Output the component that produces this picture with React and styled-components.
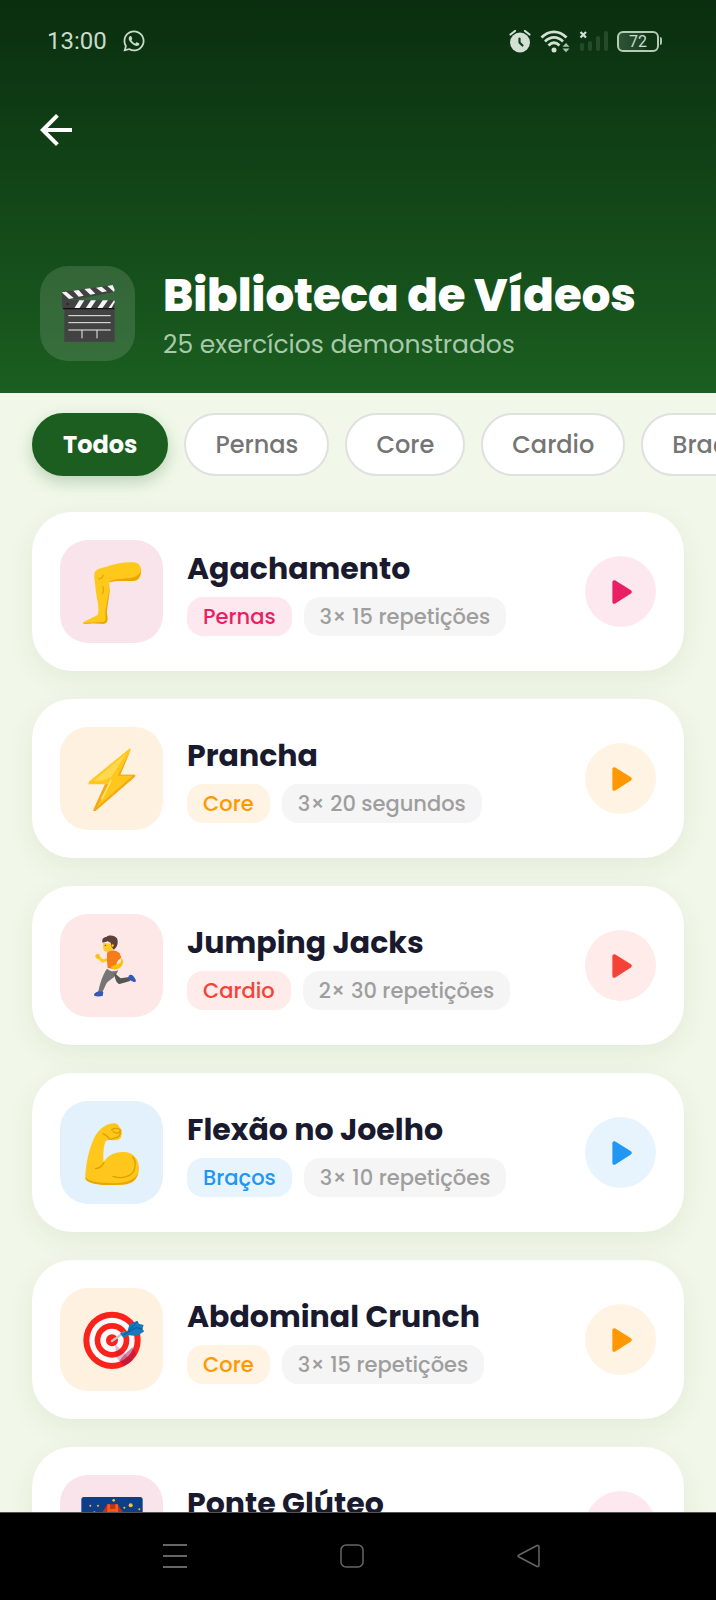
import styled, { createGlobalStyle } from 'styled-components';
import { FaWhatsapp } from 'react-icons/fa';

const GlobalStyle = createGlobalStyle`
  * {
    box-sizing: border-box;
  }

  body {
    margin: 0;
    background-color: #f1f8e9;
    font-family: 'Poppins', 'Inter', sans-serif;
  }

  button {
    font-family: inherit;
    cursor: pointer;
  }
`;

const Screen = styled.div`
  height: 100vh;
  display: flex;
  flex-direction: column;
  overflow: hidden;
`;

const Header = styled.header`
  flex-shrink: 0;
  padding-bottom: 29px;
  background: linear-gradient(180deg, #0a2e0f 0%, #1b5e20 100%);
  color: white;
`;

const StatusBar = styled.div`
  height: 82px;
  padding: 0 54px 0 47px;
  display: flex;
  align-items: center;
  justify-content: space-between;
  font-family: 'Roboto', sans-serif;
  font-size: 24px;
  color: #c8dcc9;
`;

const StatusGroup = styled.div`
  display: flex;
  align-items: center;
  gap: ${props => props.$gap};
`;

const Battery = styled.div`
  display: flex;
  align-items: center;
  gap: 1px;

  &::after {
    content: '';
    width: 2px;
    height: 8px;
    border-radius: 0 2px 2px 0;
    background-color: #a9c4ab;
  }
`;

const BatteryBody = styled.div`
  width: 42px;
  height: 21px;
  border: 2px solid #b4ccb5;
  border-radius: 6px;
  background: linear-gradient(90deg, #2f5234 0%, #1d4224 60%, #0d3413 72%);
  font-size: 16px;
  line-height: 18px;
  text-align: center;
`;

const BackButton = styled.button`
  margin: 24px 0 0 32px;
  padding: 0;
  border: none;
  background: none;
  color: white;
  display: flex;

  svg {
    width: 48px;
    height: 48px;
  }
`;

const Heading = styled.div`
  margin-top: 108px;
  padding: 0 40px;
  display: flex;
  align-items: center;
  gap: 28px;
`;

const HeadingIcon = styled.div`
  width: 95px;
  height: 95px;
  border-radius: 28px;
  background-color: rgba(255, 255, 255, 0.13);
  display: flex;
  align-items: center;
  justify-content: center;
`;

const HeadingText = styled.div`
  padding-top: 4px;
`;

const Title = styled.h1`
  margin: 0;
  font-size: 45px;
  font-weight: 800;
  line-height: 60px;
  white-space: nowrap;
`;

const Subtitle = styled.p`
  margin: 0;
  font-size: 25px;
  line-height: 38px;
  color: #a9c9ab;
`;

const Filters = styled.nav`
  flex-shrink: 0;
  padding: 20px 32px 36px;
  display: flex;
  gap: 16px;
  overflow: hidden;
`;

const FilterChip = styled.button`
  flex-shrink: 0;
  height: 63px;
  padding: 0 29px;
  border: 2px solid ${props => (props.$active ? '#1b5e20' : '#e0e0e0')};
  border-radius: 32px;
  background-color: ${props => (props.$active ? '#1b5e20' : 'white')};
  box-shadow: ${props => (props.$active ? '0 6px 16px rgba(27, 94, 32, 0.25)' : 'none')};
  color: ${props => (props.$active ? 'white' : '#757575')};
  font-size: 24px;
  font-weight: ${props => (props.$active ? 700 : 500)};
`;

const List = styled.main`
  flex: 1;
  min-height: 0;
  padding: 0 32px;
  display: flex;
  flex-direction: column;
  gap: 28px;
`;

const Card = styled.article`
  flex-shrink: 0;
  padding: 28px;
  border-radius: 40px;
  background-color: white;
  box-shadow: 0 8px 28px rgba(40, 60, 30, 0.07);
  display: flex;
  align-items: center;
  gap: 24px;
`;

const Thumb = styled.div`
  width: 103px;
  height: 103px;
  border-radius: 28px;
  background-color: ${props => props.$tint};
  display: flex;
  align-items: center;
  justify-content: center;
`;

const CardBody = styled.div`
  flex: 1;
  padding-top: 2px;
`;

const CardTitle = styled.h2`
  margin: 0 0 8px;
  font-size: 30px;
  font-weight: 700;
  line-height: 40px;
  color: #1a1a2e;
`;

const Tags = styled.div`
  display: flex;
  gap: 12px;
`;

const Tag = styled.span`
  padding: 1px 16px 0;
  border-radius: 16px;
  background-color: ${props => props.$tint};
  color: ${props => props.$color};
  font-size: 21px;
  font-weight: 500;
  line-height: 38px;
  white-space: nowrap;
`;

const PlayButton = styled.button`
  width: 71px;
  height: 71px;
  padding: 0;
  border: none;
  border-radius: 50%;
  background-color: ${props => props.$tint};
  color: ${props => props.$color};
  display: flex;
  align-items: center;
  justify-content: center;
`;

const SystemNav = styled.footer`
  flex-shrink: 0;
  height: 88px;
  padding: 0 12px 2px 0;
  border-top: 1px solid #555;
  background-color: black;
  display: flex;
  align-items: center;
  justify-content: center;
  gap: 153px;
`;

const SystemButton = styled.button`
  padding: 0;
  border: none;
  background: none;
  color: #666;
  display: flex;
`;

const AlarmIcon = () => (
  <svg width="22" height="24" viewBox="0 0 22 24">
    <path d="M1.5 5.5L6 2M20.5 5.5L16 2" stroke="#d3e0d4" strokeWidth="2.2" strokeLinecap="round" />
    <circle cx="11" cy="13.5" r="10" fill="#d3e0d4" />
    <path d="M10.5 9.5V13.5L13.5 16.5" stroke="#123d18" strokeWidth="2.2" fill="none" strokeLinecap="round" />
  </svg>
);

const WifiIcon = () => (
  <svg width="30" height="24" viewBox="0 0 30 24">
    <g fill="none" stroke="#d3e0d4" strokeWidth="2.8">
      <path d="M1.5 8.5C9 1 19 1 26.5 8.5" />
      <path d="M5 12.5C10.5 7 17.5 7 23 12.5" />
      <path d="M8.5 16.5C12 13 16 13 19.5 16.5" />
    </g>
    <circle cx="14" cy="21" r="2.5" fill="#d3e0d4" />
    <path d="M22.5 17.8L26 14L29.5 17.8ZM22.5 19.5L26 23.3L29.5 19.5Z" fill="#a9c4ab" />
  </svg>
);

const SignalIcon = () => (
  <svg width="29" height="24" viewBox="0 0 29 24">
    <path d="M1.5 3L7 8.5M7 3L1.5 8.5" stroke="#d3e0d4" strokeWidth="2.2" />
    <g stroke="#244c29" strokeWidth="4" strokeLinecap="round">
      <path d="M3 16V20M11 14V20M19 9V20M27 4V20" />
    </g>
  </svg>
);

const PlayIcon = () => (
  <svg width="46" height="46" viewBox="0 0 24 24" fill="currentColor">
    <path d="M7.5 6.82v10.36c0 .79.87 1.27 1.54.84l8.14-5.18c.62-.39.62-1.29 0-1.69L9.04 5.98C8.37 5.55 7.5 6.03 7.5 6.82z" />
  </svg>
);

const ClapperIcon = () => (
  <svg width="64" height="64" viewBox="167 122 192 192">
    <path d="M184 155L338 134L342 155L217 180H343V304H192V204L186 203Z" fill="#424242" />
    <path d="M205 170L226 179L342 155V179H217Z" fill="#37693b" />
    <g fill="#f5f5f5">
      <path d="M184 156L198 154L220 173L206 176Z" />
      <path d="M219 151L235 149L250 166L235 169Z" />
      <path d="M252 146L269 144L285 160L270 163Z" />
      <path d="M287 142L304 139L320 153L305 156Z" />
      <path d="M321 137L337 134L343 148L341 155Z" />
      <path d="M237 180H252L237 204H222Z" />
      <path d="M272 180H287L271 204H256Z" />
      <path d="M307 180H323L306 204H291Z" />
      <path d="M341 180L344 184L333 204H324Z" />
    </g>
    <path d="M188 205H342" stroke="#111" strokeWidth="4" />
    <path d="M204 226H331M204 247H331M204 269H331M245 269V294M290 269V294" stroke="#eee" strokeWidth="3" />
    <circle cx="202" cy="191" r="3" fill="#222" />
  </svg>
);

const LegIcon = () => (
  <svg width="64" height="64" viewBox="178 179 192 192">
    <path
      d="M222 216C226 206 242 203 256 199C282 190 314 184 338 186C356 187 363 200 361 216C360 234 352 242 334 242C308 243 282 239 264 247C270 262 268 278 263 296C259 315 258 333 260 350C262 362 258 369 247 370L215 369C205 371 188 372 187 368C187 363 202 360 211 354C222 347 232 348 233 335C235 307 225 286 224 258C222 239 219 228 222 216Z"
      fill="#ffc91c"
    />
    <path
      d="M361 204C361 217 352 227 338 231C315 238 277 232 264 247C283 239 307 243 334 242C354 242 361 230 361 204ZM264 247C270 270 256 308 254 341C254 354 257 362 247 365L187 368C188 372 202 370 215 369L247 370C261 370 262 359 259 340C258 314 270 289 264 247Z"
      fill="#eba600"
    />
    <path d="M235 236C242 235 247 231 247 224M247 259C250 267 249 274 246 280" fill="none" stroke="#eba600" strokeWidth="4" strokeLinecap="round" />
  </svg>
);

const BoltIcon = () => (
  <svg width="64" height="64" viewBox="178 170 192 192">
    <path d="M325 176L207 272C202 277 203 282 210 282H253L219 357C217 363 221 364 225 361L341 261C346 256 344 253 338 253H299L329 181C331 175 329 173 325 176Z" fill="#ffc61c" />
    <path d="M318 187L218 272H244L272 260Z" fill="#ffd84b" />
    <path d="M329 181L291 256H336L229 350L267 282H210C204 281 204 278 206 274L204 280C203 282 205 283 210 282H253L219 357C217 363 221 364 225 361L341 261C346 256 344 253 338 253H299Z" fill="#f4a91b" />
    <path d="M271 270L244 325" stroke="#ffe36b" strokeWidth="5" strokeLinecap="round" />
  </svg>
);

const RunnerIcon = () => (
  <svg width="64" height="64" viewBox="178 161 192 192">
    <path d="M248 188L276 190V211L264 216L250 212C247 205 247 198 248 188Z" fill="#ffca28" />
    <path d="M246 187C242 177 249 170 257 170C265 162 283 165 289 174C294 187 290 202 279 208L273 200L270 187L261 183Z" fill="#5d4037" />
    <path d="M272 194C278 188 283 196 276 201" fill="#ffca28" />
    <circle cx="254" cy="195" r="2" fill="#513529" />
    <path d="M231 229L246 242L260 238" fill="none" stroke="#ffca28" strokeWidth="9" strokeLinecap="round" />
    <circle cx="231" cy="228" r="7" fill="#ffc107" />
    <path d="M259 217C272 207 288 209 297 219L302 232C297 237 288 240 288 252L285 267L261 263L259 241Z" fill="#f57c18" />
    <path d="M299 232C304 240 301 251 284 253L272 258C270 264 276 268 285 267C300 264 311 252 306 238Z" fill="#ffc107" />
    <path d="M259 265C267 273 280 275 293 270L286 284C277 295 263 301 258 308C252 320 247 331 244 340L232 336C237 317 243 287 259 265Z" fill="#757575" />
    <path d="M281 278L300 294L326 290L328 302L297 311C287 310 282 293 281 278Z" fill="#555" />
    <path d="M324 287C328 280 337 282 342 293C347 299 347 307 340 305C330 301 321 299 324 287ZM220 342C226 333 238 331 248 335L246 347C235 349 218 350 220 342Z" fill="#3159b5" />
  </svg>
);

const BicepsIcon = () => (
  <svg width="64" height="64" viewBox="178 152 192 192">
    <path
      d="M194 314C196 281 204 243 215 216C225 188 244 168 265 161C282 156 293 158 296 171C307 178 304 193 300 203C293 212 278 210 266 208L255 212C247 230 248 257 248 276C263 254 283 244 308 245C340 245 356 269 355 297C353 325 337 342 304 343C274 346 231 344 207 335C196 331 193 325 194 314Z"
      fill="#ffc61c"
    />
    <path
      d="M225 295C237 294 248 284 250 276M277 318C312 329 342 314 343 288C345 274 343 267 336 260M248 190C256 195 264 200 267 207L281 204M273 178C284 171 297 174 300 181C295 190 284 191 277 183M283 202C294 202 298 196 299 188"
      fill="none"
      stroke="#dca000"
      strokeWidth="4"
      strokeLinecap="round"
    />
    <path d="M194 320C206 336 238 337 267 338C310 341 342 332 353 306C347 335 329 344 292 343C258 346 190 344 194 320Z" fill="#eba600" />
  </svg>
);

const TargetIcon = () => (
  <svg width="64" height="64" viewBox="178 144 192 192">
    <circle cx="274" cy="241" r="86" fill="#f9231b" />
    <circle cx="274" cy="241" r="68" fill="#fafafa" />
    <circle cx="274" cy="241" r="52" fill="#f9231b" />
    <circle cx="274" cy="241" r="35" fill="#fafafa" />
    <circle cx="274" cy="241" r="18" fill="#f9231b" />
    <path d="M283 252L334 302L310 319L287 292Z" fill="#a50d49" opacity="0.25" />
    <path d="M310 285L335 262L346 283L328 307L311 316L296 302Z" fill="#a91449" opacity="0.5" />
    <path d="M274 243L310 218" stroke="#b8cbd0" strokeWidth="7" strokeLinecap="round" />
    <path d="M298 220L320 214L327 192L350 182L355 191L369 195L365 207L371 214L349 228L324 226L308 233Z" fill="#1878bd" />
    <path d="M310 224L346 203L366 207M323 214L350 185" fill="none" stroke="#0b599b" strokeWidth="3" />
  </svg>
);

const BridgeIcon = () => (
  <svg width="64" height="64" viewBox="178 194 192 192">
    <rect x="182" y="200" width="184" height="172" rx="8" fill="#0d3f88" />
    <path d="M246 372V244L260 222H290L306 244V372Z" fill="#bf360c" />
    <path d="M264 222V372M288 222V372M264 240H290" fill="none" stroke="#ff5722" strokeWidth="8" />
    <path d="M182 340H366V372H182Z" fill="#f4511e" />
    <g fill="#fbc02d">
      <circle cx="209" cy="226" r="3" />
      <circle cx="232" cy="226" r="3" />
      <circle cx="221" cy="246" r="3" />
      <circle cx="279" cy="210" r="4" />
      <circle cx="311" cy="232" r="3" />
      <circle cx="330" cy="225" r="6" />
      <circle cx="356" cy="237" r="3" />
    </g>
  </svg>
);

const PALETTE = {
  Pernas: { color: '#e91e63', thumb: '#fae4ec', tint: '#fde8ef' },
  Core: { color: '#ff9800', thumb: '#fff1e0', tint: '#fff3e3' },
  Cardio: { color: '#f44336', thumb: '#fde7e7', tint: '#feebea' },
  Braços: { color: '#2196f3', thumb: '#e3f1fd', tint: '#e7f4fe' },
};

const FILTERS = ['Todos', 'Pernas', 'Core', 'Cardio', 'Braços'];

const EXERCISES = [
  { name: 'Agachamento', category: 'Pernas', reps: '3× 15 repetições', Icon: LegIcon },
  { name: 'Prancha', category: 'Core', reps: '3× 20 segundos', Icon: BoltIcon },
  { name: 'Jumping Jacks', category: 'Cardio', reps: '2× 30 repetições', Icon: RunnerIcon },
  { name: 'Flexão no Joelho', category: 'Braços', reps: '3× 10 repetições', Icon: BicepsIcon },
  { name: 'Abdominal Crunch', category: 'Core', reps: '3× 15 repetições', Icon: TargetIcon },
  { name: 'Ponte Glúteo', category: 'Pernas', reps: '3× 15 repetições', Icon: BridgeIcon },
];

const ExerciseCard = ({ exercise }) => {
  const { name, category, reps, Icon } = exercise;
  const { color, thumb, tint } = PALETTE[category];

  return (
    <Card>
      <Thumb $tint={thumb}>
        <Icon />
      </Thumb>
      <CardBody>
        <CardTitle>{name}</CardTitle>
        <Tags>
          <Tag $tint={tint} $color={color}>{category}</Tag>
          <Tag $tint="#f5f5f5" $color="#9e9e9e">{reps}</Tag>
        </Tags>
      </CardBody>
      <PlayButton $tint={tint} $color={color} aria-label={`Reproduzir ${name}`}>
        <PlayIcon />
      </PlayButton>
    </Card>
  );
};

const App = () => (
  <Screen>
    <GlobalStyle />
    <Header>
      <StatusBar>
        <StatusGroup $gap="15px">
          <span>13:00</span>
          <FaWhatsapp size={24} />
        </StatusGroup>
        <StatusGroup $gap="9px">
          <AlarmIcon />
          <WifiIcon />
          <SignalIcon />
          <Battery>
            <BatteryBody>72</BatteryBody>
          </Battery>
        </StatusGroup>
      </StatusBar>

      <BackButton aria-label="Voltar">
        <svg viewBox="0 0 24 24" fill="currentColor">
          <path d="M20 11H7.83l5.59-5.59L12 4l-8 8 8 8 1.41-1.41L7.83 13H20v-2z" />
        </svg>
      </BackButton>

      <Heading>
        <HeadingIcon>
          <ClapperIcon />
        </HeadingIcon>
        <HeadingText>
          <Title>Biblioteca de Vídeos</Title>
          <Subtitle>25 exercícios demonstrados</Subtitle>
        </HeadingText>
      </Heading>
    </Header>

    <Filters>
      {FILTERS.map((filter, i) => (
        <FilterChip key={filter} $active={i === 0} aria-pressed={i === 0}>
          {filter}
        </FilterChip>
      ))}
    </Filters>

    <List>
      {EXERCISES.map(exercise => (
        <ExerciseCard key={exercise.name} exercise={exercise} />
      ))}
    </List>

    <SystemNav>
      <SystemButton aria-label="Recentes">
        <svg width="24" height="24" viewBox="0 0 24 24" stroke="currentColor" strokeWidth="2">
          <path d="M0 1H24M0 12H24M0 23H24" />
        </svg>
      </SystemButton>
      <SystemButton aria-label="Início">
        <svg width="24" height="24" viewBox="0 0 24 24" fill="none" stroke="currentColor" strokeWidth="1.5">
          <rect x="1" y="1" width="22" height="22" rx="5" />
        </svg>
      </SystemButton>
      <SystemButton aria-label="Voltar ao app anterior">
        <svg width="24" height="24" viewBox="0 0 24 24" fill="none" stroke="currentColor" strokeWidth="1.5" strokeLinejoin="round">
          <path d="M2 11L20 1.5Q22 1 22 3V21Q22 23 20 22.5L2 13Q0 12 2 11Z" />
        </svg>
      </SystemButton>
    </SystemNav>
  </Screen>
);

export default App;
